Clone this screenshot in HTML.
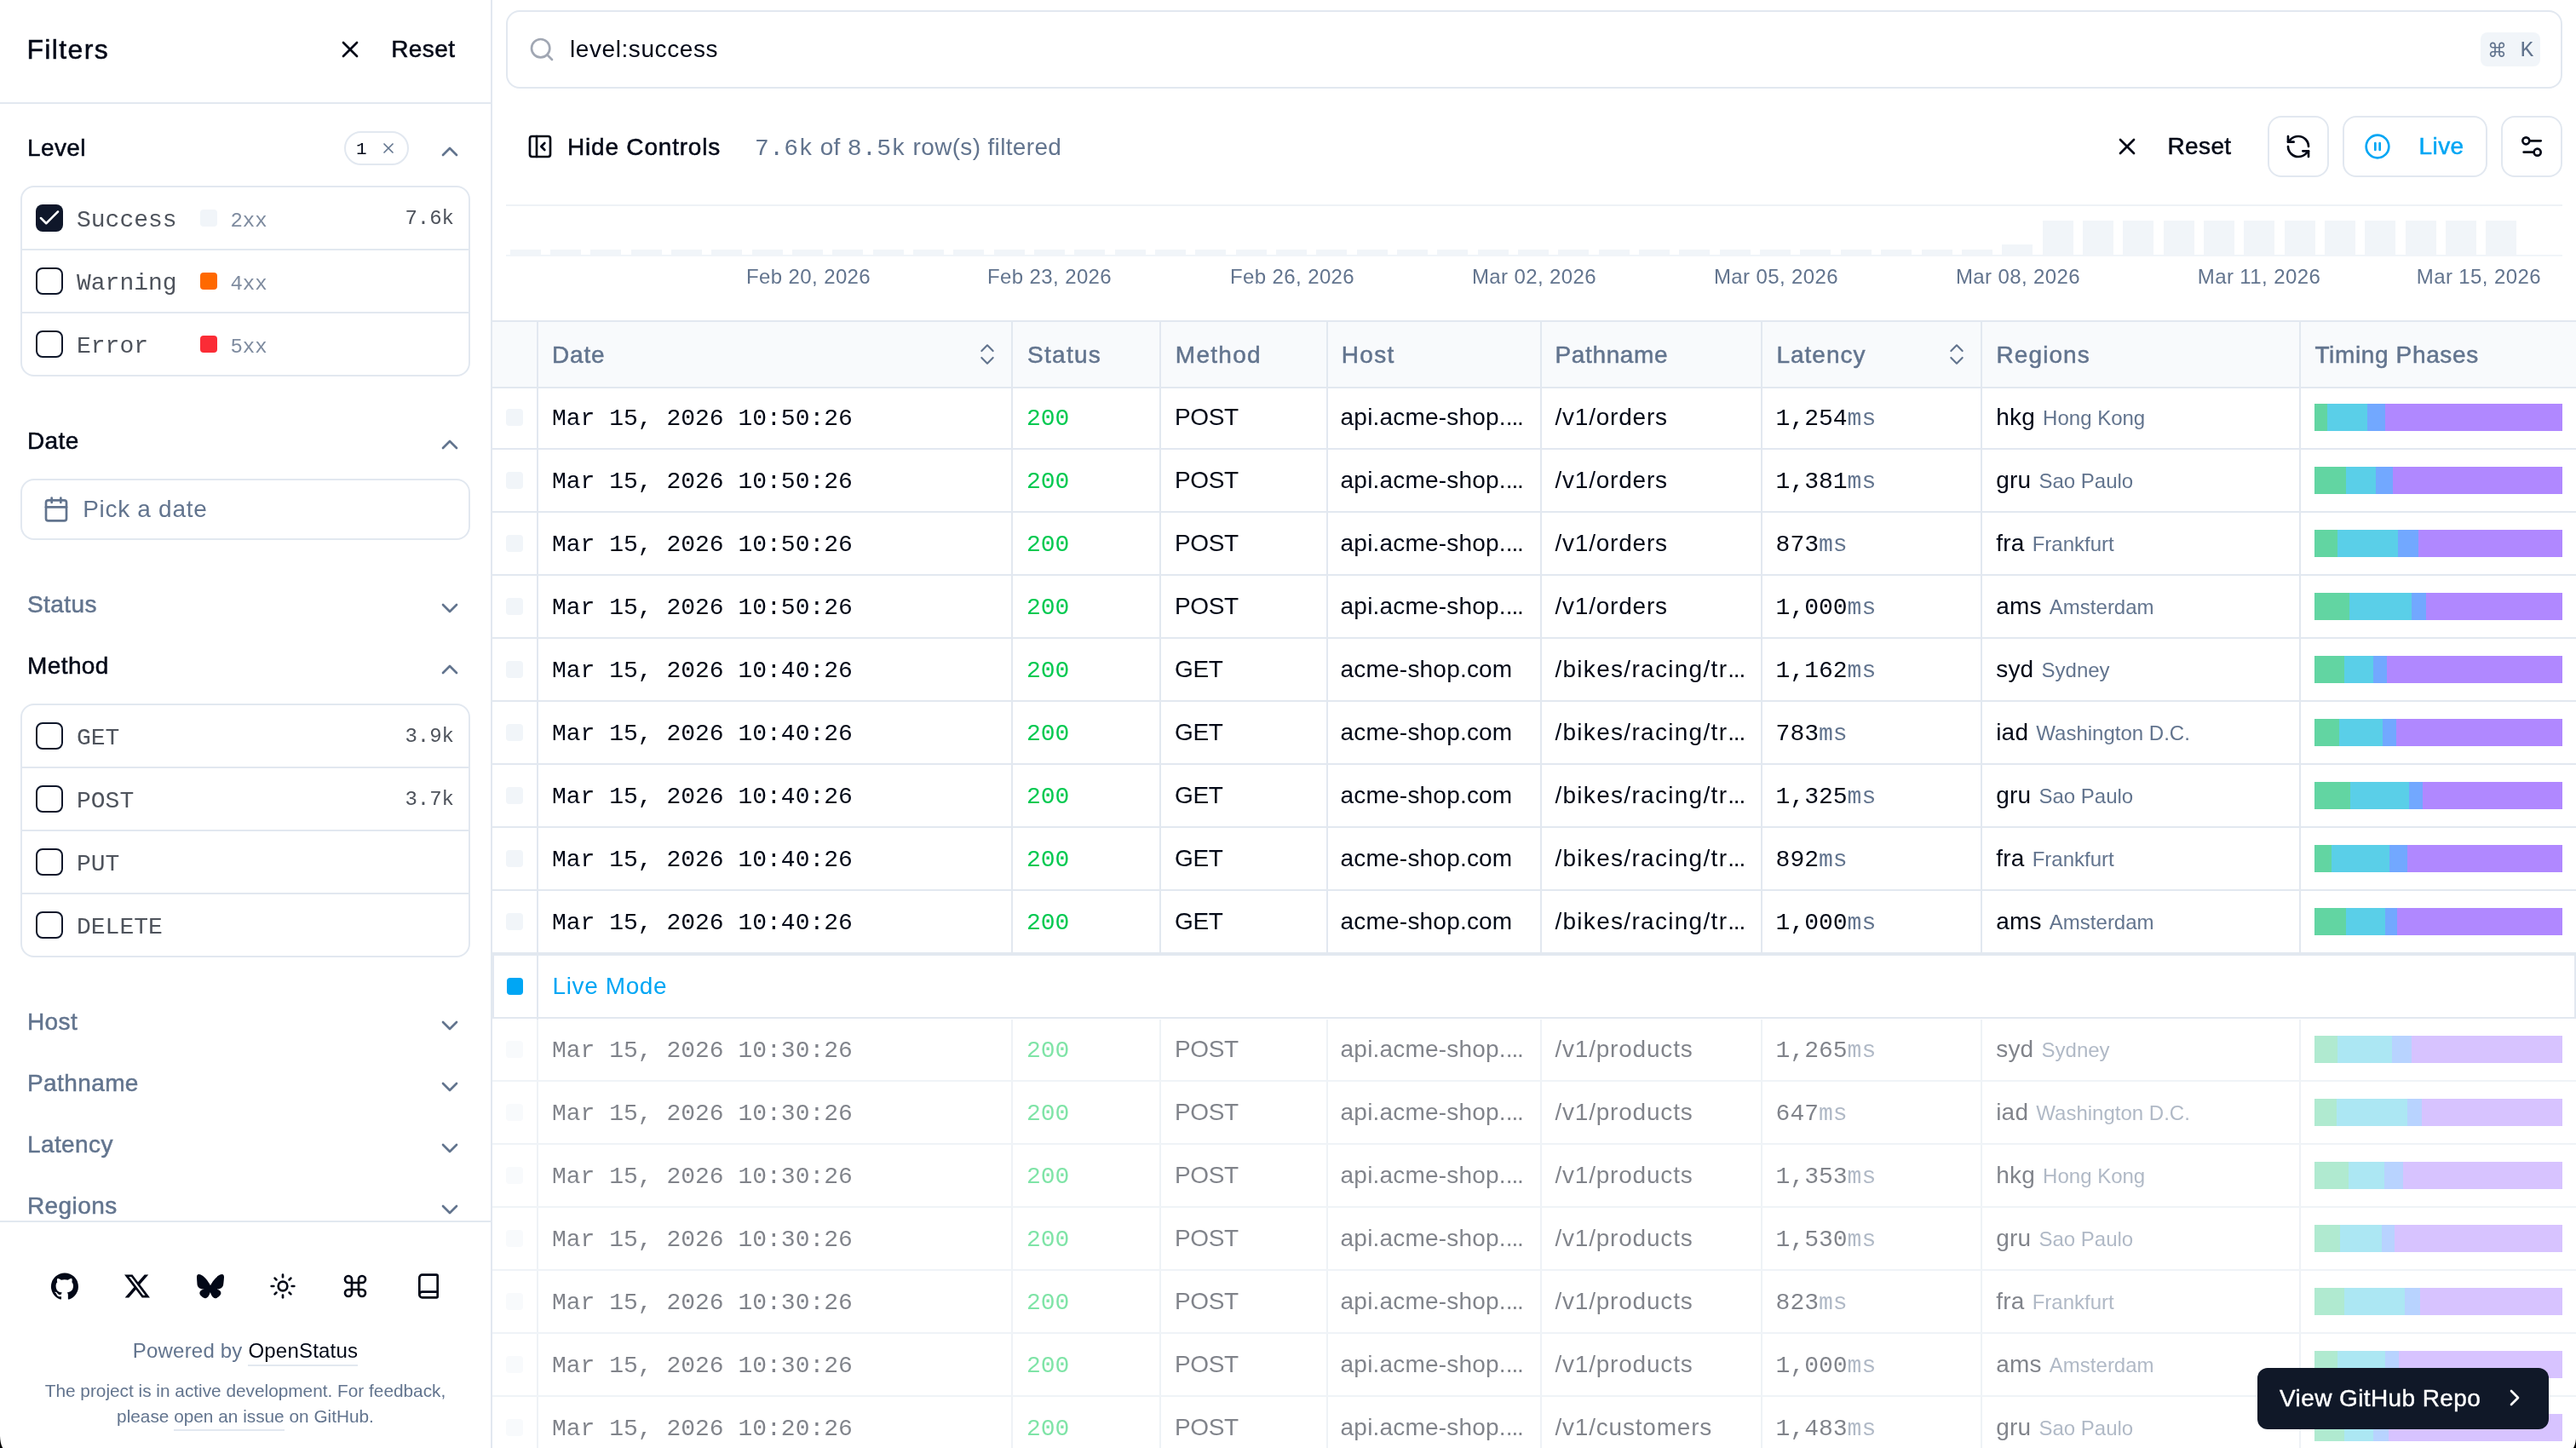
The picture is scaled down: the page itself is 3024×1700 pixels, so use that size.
<!DOCTYPE html>
<html><head><meta charset="utf-8"><title>Data Table</title>
<style>
html,body{margin:0;padding:0;}
body{width:1512px;height:850px;overflow:hidden;position:relative;background:#fff;zoom:2;font-family:"Liberation Sans",sans-serif;}
@media (max-width:2000px){body{zoom:1;}}
.t{position:absolute;line-height:1;white-space:nowrap;}
.s{font-family:"Liberation Sans",sans-serif;}
.m{font-family:"Liberation Mono",monospace;}
.r{position:absolute;box-sizing:content-box;}
.i{position:absolute;overflow:visible;}
</style></head><body><div id="root" style="position:absolute;left:0;top:0;width:1512px;height:850px;overflow:hidden;will-change:transform">
<div class="r" style="left:288px;top:0px;width:1px;height:850px;background:#e2e8f0;"></div>
<div class="r" style="left:0px;top:60px;width:288px;height:1px;background:#e2e8f0;"></div>
<div class="t s" style="left:15.70px;top:20.86px;font-size:16px;color:#020817;-webkit-text-stroke:0.25px currentColor;letter-spacing:0.68px;">Filters</div>
<svg class="i" style="left:197.50px;top:21.00px;width:16px;height:16px;" viewBox="0 0 24 24" fill="none" stroke="#020817" stroke-width="2" stroke-linecap="round" stroke-linejoin="round"><path d="M18 6 6 18"/><path d="m6 6 12 12"/></svg>
<div class="t s" style="left:229.60px;top:22.05px;font-size:14px;color:#020817;-webkit-text-stroke:0.25px currentColor;letter-spacing:0.2px;">Reset</div>
<div class="t s" style="left:16.00px;top:80.15px;font-size:14px;color:#020817;-webkit-text-stroke:0.25px currentColor;letter-spacing:0.2px;">Level</div>
<div class="r" style="left:202px;top:77px;width:36px;height:18px;border:1px solid #e2e8f0;border-radius:10px;"></div>
<div class="t m" style="left:209.00px;top:82.46px;font-size:10.5px;color:#020817;">1</div>
<svg class="i" style="left:223.00px;top:82.00px;width:10px;height:10px;" viewBox="0 0 24 24" fill="none" stroke="#62748e" stroke-width="2" stroke-linecap="round" stroke-linejoin="round"><path d="M18 6 6 18"/><path d="m6 6 12 12"/></svg>
<svg class="i" style="left:256.00px;top:81.00px;width:16px;height:16px;" viewBox="0 0 24 24" fill="none" stroke="#62748e" stroke-width="2" stroke-linecap="round" stroke-linejoin="round"><path d="m18 15-6-6-6 6"/></svg>
<div class="r" style="left:12px;top:109px;width:262px;height:110px;border:1px solid #e2e8f0;border-radius:8px;"></div>
<div class="r" style="left:13px;top:146px;width:262px;height:1px;background:#e2e8f0;"></div>
<div class="r" style="left:13px;top:183px;width:262px;height:1px;background:#e2e8f0;"></div>
<div class="r" style="left:21px;top:120px;width:16px;height:16px;background:#0f172a;border-radius:4px;"></div>
<svg class="i" style="left:21.3px;top:120.50px;width:15px;height:15px" viewBox="0 0 24 24" fill="none" stroke="#fff" stroke-width="2" stroke-linecap="round" stroke-linejoin="round"><path d="M20 6 9 17l-5-5"/></svg>
<div class="t m" style="left:45.00px;top:122.48px;font-size:14px;color:#4e535c;">Success</div>
<div class="r" style="left:117.5px;top:123px;width:10px;height:10px;background:#f1f5f9;border-radius:2px;"></div>
<div class="t m" style="left:135.20px;top:124.01px;font-size:12px;color:#7f8ca0;">2xx</div>
<div class="t m" style="right:1245.5px;top:122.48px;font-size:12px;color:#4e535c">7.6k</div>
<div class="r" style="left:21px;top:157px;width:14px;height:14px;border:1px solid #0f172a;border-radius:4px;"></div>
<div class="t m" style="left:45.00px;top:159.48px;font-size:14px;color:#4e535c;">Warning</div>
<div class="r" style="left:117.5px;top:160px;width:10px;height:10px;background:#ff6900;border-radius:2px;"></div>
<div class="t m" style="left:135.20px;top:161.01px;font-size:12px;color:#7f8ca0;">4xx</div>
<div class="r" style="left:21px;top:194px;width:14px;height:14px;border:1px solid #0f172a;border-radius:4px;"></div>
<div class="t m" style="left:45.00px;top:196.48px;font-size:14px;color:#4e535c;">Error</div>
<div class="r" style="left:117.5px;top:197px;width:10px;height:10px;background:#fb2c36;border-radius:2px;"></div>
<div class="t m" style="left:135.20px;top:198.01px;font-size:12px;color:#7f8ca0;">5xx</div>
<div class="t s" style="left:16.00px;top:252.15px;font-size:14px;color:#020817;-webkit-text-stroke:0.25px currentColor;letter-spacing:0.2px;">Date</div>
<svg class="i" style="left:256.00px;top:253.00px;width:16px;height:16px;" viewBox="0 0 24 24" fill="none" stroke="#62748e" stroke-width="2" stroke-linecap="round" stroke-linejoin="round"><path d="m18 15-6-6-6 6"/></svg>
<div class="r" style="left:12px;top:281px;width:262px;height:34px;border:1px solid #e2e8f0;border-radius:8px;"></div>
<svg class="i" style="left:25.00px;top:291.00px;width:16px;height:16px;" viewBox="0 0 24 24" fill="none" stroke="#62748e" stroke-width="2" stroke-linecap="round" stroke-linejoin="round"><path d="M8 2v4"/><path d="M16 2v4"/><rect width="18" height="18" x="3" y="4" rx="2"/><path d="M3 10h18"/></svg>
<div class="t s" style="left:48.60px;top:292.15px;font-size:14px;color:#62748e;letter-spacing:0.35px;">Pick a date</div>
<div class="t s" style="left:16.00px;top:348.15px;font-size:14px;color:#62748e;-webkit-text-stroke:0.25px currentColor;letter-spacing:0.2px;">Status</div>
<svg class="i" style="left:256.00px;top:349.00px;width:16px;height:16px;" viewBox="0 0 24 24" fill="none" stroke="#62748e" stroke-width="2" stroke-linecap="round" stroke-linejoin="round"><path d="m6 9 6 6 6-6"/></svg>
<div class="t s" style="left:16.00px;top:384.15px;font-size:14px;color:#020817;-webkit-text-stroke:0.25px currentColor;letter-spacing:0.2px;">Method</div>
<svg class="i" style="left:256.00px;top:385.00px;width:16px;height:16px;" viewBox="0 0 24 24" fill="none" stroke="#62748e" stroke-width="2" stroke-linecap="round" stroke-linejoin="round"><path d="m18 15-6-6-6 6"/></svg>
<div class="r" style="left:12px;top:413px;width:262px;height:147px;border:1px solid #e2e8f0;border-radius:8px;"></div>
<div class="r" style="left:13px;top:450px;width:262px;height:1px;background:#e2e8f0;"></div>
<div class="r" style="left:13px;top:487px;width:262px;height:1px;background:#e2e8f0;"></div>
<div class="r" style="left:13px;top:524px;width:262px;height:1px;background:#e2e8f0;"></div>
<div class="r" style="left:21px;top:424px;width:14px;height:14px;border:1px solid #0f172a;border-radius:4px;"></div>
<div class="t m" style="left:45.00px;top:426.48px;font-size:14px;color:#4e535c;">GET</div>
<div class="t m" style="right:1245.5px;top:426.48px;font-size:12px;color:#4e535c">3.9k</div>
<div class="r" style="left:21px;top:461px;width:14px;height:14px;border:1px solid #0f172a;border-radius:4px;"></div>
<div class="t m" style="left:45.00px;top:463.48px;font-size:14px;color:#4e535c;">POST</div>
<div class="t m" style="right:1245.5px;top:463.48px;font-size:12px;color:#4e535c">3.7k</div>
<div class="r" style="left:21px;top:498px;width:14px;height:14px;border:1px solid #0f172a;border-radius:4px;"></div>
<div class="t m" style="left:45.00px;top:500.48px;font-size:14px;color:#4e535c;">PUT</div>
<div class="r" style="left:21px;top:535px;width:14px;height:14px;border:1px solid #0f172a;border-radius:4px;"></div>
<div class="t m" style="left:45.00px;top:537.48px;font-size:14px;color:#4e535c;">DELETE</div>
<div class="t s" style="left:16.00px;top:593.15px;font-size:14px;color:#62748e;-webkit-text-stroke:0.25px currentColor;letter-spacing:0.2px;">Host</div>
<svg class="i" style="left:256.00px;top:594.00px;width:16px;height:16px;" viewBox="0 0 24 24" fill="none" stroke="#62748e" stroke-width="2" stroke-linecap="round" stroke-linejoin="round"><path d="m6 9 6 6 6-6"/></svg>
<div class="t s" style="left:16.00px;top:629.15px;font-size:14px;color:#62748e;-webkit-text-stroke:0.25px currentColor;letter-spacing:0.2px;">Pathname</div>
<svg class="i" style="left:256.00px;top:630.00px;width:16px;height:16px;" viewBox="0 0 24 24" fill="none" stroke="#62748e" stroke-width="2" stroke-linecap="round" stroke-linejoin="round"><path d="m6 9 6 6 6-6"/></svg>
<div class="t s" style="left:16.00px;top:665.15px;font-size:14px;color:#62748e;-webkit-text-stroke:0.25px currentColor;letter-spacing:0.2px;">Latency</div>
<svg class="i" style="left:256.00px;top:666.00px;width:16px;height:16px;" viewBox="0 0 24 24" fill="none" stroke="#62748e" stroke-width="2" stroke-linecap="round" stroke-linejoin="round"><path d="m6 9 6 6 6-6"/></svg>
<div class="t s" style="left:16.00px;top:701.15px;font-size:14px;color:#62748e;-webkit-text-stroke:0.25px currentColor;letter-spacing:0.2px;">Regions</div>
<svg class="i" style="left:256.00px;top:702.00px;width:16px;height:16px;" viewBox="0 0 24 24" fill="none" stroke="#62748e" stroke-width="2" stroke-linecap="round" stroke-linejoin="round"><path d="m6 9 6 6 6-6"/></svg>
<div class="r" style="left:0px;top:716.5px;width:288px;height:133.5px;background:#fff;"></div>
<div class="r" style="left:0px;top:716.5px;width:288px;height:1px;background:#e2e8f0;"></div>
<svg class="i" style="left:30.00px;top:747.00px;width:16px;height:16px;color:#020817" viewBox="0 0 24 24" fill="none" stroke="#020817" stroke-width="2" stroke-linecap="round" stroke-linejoin="round"><path fill="currentColor" stroke="none" d="M12 .3a12 12 0 0 0-3.8 23.4c.6.1.8-.3.8-.6v-2c-3.3.7-4-1.6-4-1.6-.6-1.4-1.4-1.8-1.4-1.8-1-.7.1-.7.1-.7 1.2.1 1.8 1.2 1.8 1.2 1 1.8 2.8 1.3 3.5 1 0-.8.4-1.3.7-1.6-2.7-.3-5.5-1.3-5.5-6 0-1.2.5-2.3 1.3-3.1-.2-.4-.6-1.6 0-3.2 0 0 1-.3 3.4 1.2a11.5 11.5 0 0 1 6 0c2.3-1.5 3.3-1.2 3.3-1.2.6 1.6.2 2.8 0 3.2.9.8 1.3 1.9 1.3 3.2 0 4.6-2.8 5.6-5.5 5.9.5.4.9 1 .9 2.2v3.3c0 .3.1.7.8.6A12 12 0 0 0 12 .3"/></svg>
<svg class="i" style="left:73.00px;top:747.50px;width:15px;height:15px;color:#020817" viewBox="0 0 24 24" fill="none" stroke="#020817" stroke-width="2" stroke-linecap="round" stroke-linejoin="round"><path fill="currentColor" stroke="none" d="M18.9 1.2h3.7l-8 9.2L24 22.8h-7.4l-5.8-7.6-6.6 7.6H.5L9 13 0 1.2h7.6l5.2 6.9zm-1.3 19.4h2L6.5 3.2H4.3z"/></svg>
<svg class="i" style="left:115.50px;top:747.00px;width:16px;height:16px;color:#020817" viewBox="0 0 24 24" fill="none" stroke="#020817" stroke-width="2" stroke-linecap="round" stroke-linejoin="round"><path fill="currentColor" stroke="none" d="M5.2 2.9C8 5 10.9 9.1 12 11.4c1.1-2.3 4-6.4 6.8-8.5 2-1.5 5.2-2.6 5.2 1 0 .8-.4 6.2-.7 7.1-.9 3.1-4 3.9-6.8 3.4 4.9.8 6.1 3.6 3.4 6.3-5.1 5.2-7.3-1.3-7.9-3-.1-.3-.1-.5-.1-.3 0-.2 0 0-.1.3-.6 1.7-2.8 8.2-7.9 3-2.7-2.7-1.5-5.5 3.4-6.3-2.8.5-5.9-.3-6.8-3.4C.4 10.1 0 4.7 0 3.9c0-3.6 3.2-2.5 5.2-1z"/></svg>
<svg class="i" style="left:158.00px;top:747.00px;width:16px;height:16px;" viewBox="0 0 24 24" fill="none" stroke="#020817" stroke-width="2" stroke-linecap="round" stroke-linejoin="round"><circle cx="12" cy="12" r="4"/><path d="M12 2v2"/><path d="M12 20v2"/><path d="m4.93 4.93 1.41 1.41"/><path d="m17.66 17.66 1.41 1.41"/><path d="M2 12h2"/><path d="M20 12h2"/><path d="m6.34 17.66-1.41 1.41"/><path d="m19.07 4.93-1.41 1.41"/></svg>
<svg class="i" style="left:200.50px;top:747.00px;width:16px;height:16px;" viewBox="0 0 24 24" fill="none" stroke="#020817" stroke-width="2" stroke-linecap="round" stroke-linejoin="round"><path d="M15 6v12a3 3 0 1 0 3-3H6a3 3 0 1 0 3 3V6a3 3 0 1 0-3 3h12a3 3 0 1 0-3-3"/></svg>
<svg class="i" style="left:243.50px;top:747.00px;width:16px;height:16px;" viewBox="0 0 24 24" fill="none" stroke="#020817" stroke-width="2" stroke-linecap="round" stroke-linejoin="round"><path d="M4 19.5v-15A2.5 2.5 0 0 1 6.5 2H19a1 1 0 0 1 1 1v18a1 1 0 0 1-1 1H6.5a1 1 0 0 1 0-5H20"/></svg>
<div class="t s" style="left:0;width:288px;text-align:center;top:787.14px;font-size:12px;color:#62748e;letter-spacing:0.1px">Powered by <span style="color:#020817;border-bottom:1px solid #e2e8f0;padding-bottom:1.5px">OpenStatus</span></div>
<div class="t s" style="left:0;width:288px;text-align:center;top:811.30px;font-size:10.4px;color:#62748e;line-height:15.4px;margin-top:-2.50px">The project is in active development. For feedback,<br>please <span style="border-bottom:1px solid #e2e8f0;padding-bottom:2px">open an issue</span> on GitHub.</div>
<div class="r" style="left:297px;top:6px;width:1205px;height:44px;border:1px solid #e2e8f0;border-radius:8px;"></div>
<svg class="i" style="left:310.00px;top:21.00px;width:16px;height:16px;" viewBox="0 0 24 24" fill="none" stroke="#a1a7b3" stroke-width="2" stroke-linecap="round" stroke-linejoin="round"><circle cx="11" cy="11" r="8"/><path d="m21 21-4.3-4.3"/></svg>
<div class="t s" style="left:334.50px;top:22.21px;font-size:14px;color:#020817;letter-spacing:0.29px;">level:success</div>
<div class="r" style="left:1456px;top:19px;width:35px;height:20px;background:#f1f5f9;border-radius:4px;"></div>
<div class="t s" style="left:1460.00px;top:23.87px;font-size:11.5px;color:#62748e;">⌘</div>
<div class="t m" style="left:1479.30px;top:23.14px;font-size:13px;color:#62748e;">K</div>
<svg class="i" style="left:309.00px;top:78.00px;width:16px;height:16px;" viewBox="0 0 24 24" fill="none" stroke="#020817" stroke-width="2" stroke-linecap="round" stroke-linejoin="round"><rect width="18" height="18" x="3" y="3" rx="2"/><path d="M9 3v18"/><path d="m16 15-3-3 3-3"/></svg>
<div class="t s" style="left:333.00px;top:79.35px;font-size:14px;color:#020817;-webkit-text-stroke:0.25px currentColor;letter-spacing:0.4px;">Hide Controls</div>
<div class="t s" style="left:443px;top:79.35px;font-size:14px;color:#62748e;letter-spacing:0.17px"><span class="m">7.6k</span> of <span class="m">8.5k</span> row(s) filtered</div>
<svg class="i" style="left:1240.50px;top:78.00px;width:16px;height:16px;" viewBox="0 0 24 24" fill="none" stroke="#020817" stroke-width="2" stroke-linecap="round" stroke-linejoin="round"><path d="M18 6 6 18"/><path d="m6 6 12 12"/></svg>
<div class="t s" style="left:1272.20px;top:78.95px;font-size:14px;color:#020817;-webkit-text-stroke:0.25px currentColor;letter-spacing:0.2px;">Reset</div>
<div class="r" style="left:1331px;top:68px;width:34px;height:34px;border:1px solid #e2e8f0;border-radius:8px;"></div>
<svg class="i" style="left:1341.00px;top:78.00px;width:16px;height:16px;" viewBox="0 0 24 24" fill="none" stroke="#020817" stroke-width="2" stroke-linecap="round" stroke-linejoin="round"><path d="M21 12a9 9 0 0 0-9-9 9.75 9.75 0 0 0-6.74 2.74L3 8"/><path d="M3 3v5h5"/><path d="M3 12a9 9 0 0 0 9 9 9.75 9.75 0 0 0 6.74-2.74L21 16"/><path d="M16 16h5v5"/></svg>
<div class="r" style="left:1375px;top:68px;width:83px;height:34px;border:1px solid #e2e8f0;border-radius:8px;"></div>
<svg class="i" style="left:1387.50px;top:78.00px;width:16px;height:16px;" viewBox="0 0 24 24" fill="none" stroke="#00a6f4" stroke-width="2" stroke-linecap="round" stroke-linejoin="round"><circle cx="12" cy="12" r="10"/><line x1="10" x2="10" y1="15" y2="9"/><line x1="14" x2="14" y1="15" y2="9"/></svg>
<div class="t s" style="left:1419.80px;top:79.15px;font-size:14px;color:#00a6f4;-webkit-text-stroke:0.25px currentColor;letter-spacing:0.2px;">Live</div>
<div class="r" style="left:1468px;top:68px;width:34px;height:34px;border:1px solid #e2e8f0;border-radius:8px;"></div>
<svg class="i" style="left:1478.00px;top:78.00px;width:16px;height:16px;" viewBox="0 0 24 24" fill="none" stroke="#020817" stroke-width="2" stroke-linecap="round" stroke-linejoin="round"><path d="M20 7h-9"/><path d="M14 17H5"/><circle cx="17" cy="17" r="3"/><circle cx="7" cy="7" r="3"/></svg>
<div class="r" style="left:297px;top:120px;width:1207px;height:1px;background:#eef2f6;"></div>
<div class="r" style="left:299.5px;top:146.5px;width:17.8px;height:3.0px;background:#f1f5f9;"></div>
<div class="r" style="left:323.0px;top:146.5px;width:17.8px;height:3.0px;background:#f1f5f9;"></div>
<div class="r" style="left:346.5px;top:146.5px;width:17.8px;height:3.0px;background:#f1f5f9;"></div>
<div class="r" style="left:370.5px;top:146.5px;width:17.8px;height:3.0px;background:#f1f5f9;"></div>
<div class="r" style="left:394.0px;top:146.5px;width:17.8px;height:3.0px;background:#f1f5f9;"></div>
<div class="r" style="left:417.5px;top:146.5px;width:17.8px;height:3.0px;background:#f1f5f9;"></div>
<div class="r" style="left:441.5px;top:146.5px;width:17.8px;height:3.0px;background:#f1f5f9;"></div>
<div class="r" style="left:465.0px;top:146.5px;width:17.8px;height:3.0px;background:#f1f5f9;"></div>
<div class="r" style="left:488.5px;top:146.5px;width:17.8px;height:3.0px;background:#f1f5f9;"></div>
<div class="r" style="left:512.5px;top:146.5px;width:17.8px;height:3.0px;background:#f1f5f9;"></div>
<div class="r" style="left:536.0px;top:146.5px;width:17.8px;height:3.0px;background:#f1f5f9;"></div>
<div class="r" style="left:559.5px;top:146.5px;width:17.8px;height:3.0px;background:#f1f5f9;"></div>
<div class="r" style="left:583.5px;top:146.5px;width:17.8px;height:3.0px;background:#f1f5f9;"></div>
<div class="r" style="left:607.0px;top:146.5px;width:17.8px;height:3.0px;background:#f1f5f9;"></div>
<div class="r" style="left:630.5px;top:146.5px;width:17.8px;height:3.0px;background:#f1f5f9;"></div>
<div class="r" style="left:654.5px;top:146.5px;width:17.8px;height:3.0px;background:#f1f5f9;"></div>
<div class="r" style="left:678.0px;top:146.5px;width:17.8px;height:3.0px;background:#f1f5f9;"></div>
<div class="r" style="left:701.5px;top:146.5px;width:17.8px;height:3.0px;background:#f1f5f9;"></div>
<div class="r" style="left:725.5px;top:146.5px;width:17.8px;height:3.0px;background:#f1f5f9;"></div>
<div class="r" style="left:749.0px;top:146.5px;width:17.8px;height:3.0px;background:#f1f5f9;"></div>
<div class="r" style="left:772.5px;top:146.5px;width:17.8px;height:3.0px;background:#f1f5f9;"></div>
<div class="r" style="left:796.5px;top:146.5px;width:17.8px;height:3.0px;background:#f1f5f9;"></div>
<div class="r" style="left:820.0px;top:146.5px;width:17.8px;height:3.0px;background:#f1f5f9;"></div>
<div class="r" style="left:843.5px;top:146.5px;width:17.8px;height:3.0px;background:#f1f5f9;"></div>
<div class="r" style="left:867.5px;top:146.5px;width:17.8px;height:3.0px;background:#f1f5f9;"></div>
<div class="r" style="left:891.0px;top:146.5px;width:17.8px;height:3.0px;background:#f1f5f9;"></div>
<div class="r" style="left:914.5px;top:146.5px;width:17.8px;height:3.0px;background:#f1f5f9;"></div>
<div class="r" style="left:938.5px;top:146.5px;width:17.8px;height:3.0px;background:#f1f5f9;"></div>
<div class="r" style="left:962.0px;top:146.5px;width:17.8px;height:3.0px;background:#f1f5f9;"></div>
<div class="r" style="left:985.5px;top:146.5px;width:17.8px;height:3.0px;background:#f1f5f9;"></div>
<div class="r" style="left:1009.5px;top:146.5px;width:17.8px;height:3.0px;background:#f1f5f9;"></div>
<div class="r" style="left:1033.0px;top:146.5px;width:17.8px;height:3.0px;background:#f1f5f9;"></div>
<div class="r" style="left:1056.5px;top:146.5px;width:17.8px;height:3.0px;background:#f1f5f9;"></div>
<div class="r" style="left:1080.5px;top:146.5px;width:17.8px;height:3.0px;background:#f1f5f9;"></div>
<div class="r" style="left:1104.0px;top:146.5px;width:17.8px;height:3.0px;background:#f1f5f9;"></div>
<div class="r" style="left:1128.0px;top:146.5px;width:17.8px;height:3.0px;background:#f1f5f9;"></div>
<div class="r" style="left:1151.5px;top:146.5px;width:17.8px;height:3.0px;background:#f1f5f9;"></div>
<div class="r" style="left:1175.0px;top:143.5px;width:17.8px;height:6.0px;background:#f1f5f9;"></div>
<div class="r" style="left:1199.0px;top:129.5px;width:17.8px;height:20.0px;background:#f1f5f9;"></div>
<div class="r" style="left:1222.5px;top:129.5px;width:17.8px;height:20.0px;background:#f1f5f9;"></div>
<div class="r" style="left:1246.0px;top:129.5px;width:17.8px;height:20.0px;background:#f1f5f9;"></div>
<div class="r" style="left:1270.0px;top:129.5px;width:17.8px;height:20.0px;background:#f1f5f9;"></div>
<div class="r" style="left:1293.5px;top:129.5px;width:17.8px;height:20.0px;background:#f1f5f9;"></div>
<div class="r" style="left:1317.0px;top:129.5px;width:17.8px;height:20.0px;background:#f1f5f9;"></div>
<div class="r" style="left:1341.0px;top:129.5px;width:17.8px;height:20.0px;background:#f1f5f9;"></div>
<div class="r" style="left:1364.5px;top:129.5px;width:17.8px;height:20.0px;background:#f1f5f9;"></div>
<div class="r" style="left:1388.0px;top:129.5px;width:17.8px;height:20.0px;background:#f1f5f9;"></div>
<div class="r" style="left:1412.0px;top:129.5px;width:17.8px;height:20.0px;background:#f1f5f9;"></div>
<div class="r" style="left:1435.5px;top:129.5px;width:17.8px;height:20.0px;background:#f1f5f9;"></div>
<div class="r" style="left:1459.0px;top:129.5px;width:17.8px;height:20.0px;background:#f1f5f9;"></div>
<div class="r" style="left:297px;top:149.5px;width:1207px;height:1px;background:#f1f5f9;"></div>
<div class="t s" style="left:414.5px;width:120px;text-align:center;top:156.34px;font-size:12px;color:#62748e;letter-spacing:0.2px">Feb 20, 2026</div>
<div class="t s" style="left:556px;width:120px;text-align:center;top:156.34px;font-size:12px;color:#62748e;letter-spacing:0.2px">Feb 23, 2026</div>
<div class="t s" style="left:698.5px;width:120px;text-align:center;top:156.34px;font-size:12px;color:#62748e;letter-spacing:0.2px">Feb 26, 2026</div>
<div class="t s" style="left:840.5px;width:120px;text-align:center;top:156.34px;font-size:12px;color:#62748e;letter-spacing:0.2px">Mar 02, 2026</div>
<div class="t s" style="left:982.5px;width:120px;text-align:center;top:156.34px;font-size:12px;color:#62748e;letter-spacing:0.2px">Mar 05, 2026</div>
<div class="t s" style="left:1124.5px;width:120px;text-align:center;top:156.34px;font-size:12px;color:#62748e;letter-spacing:0.2px">Mar 08, 2026</div>
<div class="t s" style="left:1266px;width:120px;text-align:center;top:156.34px;font-size:12px;color:#62748e;letter-spacing:0.2px">Mar 11, 2026</div>
<div class="t s" style="right:20.5px;top:156.34px;font-size:12px;color:#62748e;letter-spacing:0.2px">Mar 15, 2026</div>
<div class="r" style="left:289px;top:188px;width:1223px;height:1px;background:#e2e8f0;"></div>
<div class="r" style="left:289px;top:189px;width:1223px;height:38px;background:#f8fafc;"></div>
<div class="r" style="left:289px;top:227px;width:1223px;height:1px;background:#e2e8f0;"></div>
<div class="t s" style="left:324.00px;top:201.25px;font-size:14px;color:#62748e;-webkit-text-stroke:0.25px currentColor;letter-spacing:0.4px;">Date</div>
<div class="t s" style="left:602.95px;top:201.25px;font-size:14px;color:#62748e;-webkit-text-stroke:0.25px currentColor;letter-spacing:0.66px;">Status</div>
<div class="t s" style="left:689.90px;top:201.25px;font-size:14px;color:#62748e;-webkit-text-stroke:0.25px currentColor;letter-spacing:0.65px;">Method</div>
<div class="t s" style="left:787.40px;top:201.25px;font-size:14px;color:#62748e;-webkit-text-stroke:0.25px currentColor;letter-spacing:0.65px;">Host</div>
<div class="t s" style="left:912.70px;top:201.25px;font-size:14px;color:#62748e;-webkit-text-stroke:0.25px currentColor;letter-spacing:0.33px;">Pathname</div>
<div class="t s" style="left:1042.70px;top:201.25px;font-size:14px;color:#62748e;-webkit-text-stroke:0.25px currentColor;letter-spacing:0.5px;">Latency</div>
<div class="t s" style="left:1171.80px;top:201.25px;font-size:14px;color:#62748e;-webkit-text-stroke:0.25px currentColor;letter-spacing:0.53px;">Regions</div>
<div class="t s" style="left:1358.70px;top:201.25px;font-size:14px;color:#62748e;-webkit-text-stroke:0.25px currentColor;letter-spacing:0.32px;">Timing Phases</div>
<svg class="i" style="left:571.50px;top:200.00px;width:16px;height:16px;" viewBox="0 0 24 24" fill="none" stroke="#62748e" stroke-width="1.6" stroke-linecap="round" stroke-linejoin="round"><path d="m7 15 5 5 5-5"/><path d="m7 9 5-5 5 5"/></svg>
<svg class="i" style="left:1140.60px;top:200.00px;width:16px;height:16px;" viewBox="0 0 24 24" fill="none" stroke="#62748e" stroke-width="1.6" stroke-linecap="round" stroke-linejoin="round"><path d="m7 15 5 5 5-5"/><path d="m7 9 5-5 5 5"/></svg>
<div class="r" style="left:315px;top:188px;width:1px;height:371.5px;background:#e2e8f0;"></div>
<div class="r" style="left:593.5px;top:188px;width:1px;height:371.5px;background:#e2e8f0;"></div>
<div class="r" style="left:680.5px;top:188px;width:1px;height:371.5px;background:#e2e8f0;"></div>
<div class="r" style="left:778.5px;top:188px;width:1px;height:371.5px;background:#e2e8f0;"></div>
<div class="r" style="left:904px;top:188px;width:1px;height:371.5px;background:#e2e8f0;"></div>
<div class="r" style="left:1033.5px;top:188px;width:1px;height:371.5px;background:#e2e8f0;"></div>
<div class="r" style="left:1162.5px;top:188px;width:1px;height:371.5px;background:#e2e8f0;"></div>
<div class="r" style="left:1349.5px;top:188px;width:1px;height:371.5px;background:#e2e8f0;"></div>
<div class="r" style="left:315px;top:559.5px;width:1px;height:39px;background:#e2e8f0;"></div>
<div class="r" style="left:315px;top:598.5px;width:1px;height:251.5px;background:#eef2f6;"></div>
<div class="r" style="left:593.5px;top:598.5px;width:1px;height:251.5px;background:#eef2f6;"></div>
<div class="r" style="left:680.5px;top:598.5px;width:1px;height:251.5px;background:#eef2f6;"></div>
<div class="r" style="left:778.5px;top:598.5px;width:1px;height:251.5px;background:#eef2f6;"></div>
<div class="r" style="left:904px;top:598.5px;width:1px;height:251.5px;background:#eef2f6;"></div>
<div class="r" style="left:1033.5px;top:598.5px;width:1px;height:251.5px;background:#eef2f6;"></div>
<div class="r" style="left:1162.5px;top:598.5px;width:1px;height:251.5px;background:#eef2f6;"></div>
<div class="r" style="left:1349.5px;top:598.5px;width:1px;height:251.5px;background:#eef2f6;"></div>
<div style="position:absolute;left:0;top:0;width:1512px;height:850px;">
<div class="r" style="left:297px;top:240.0px;width:10px;height:10px;background:#f1f5f9;border-radius:2px;"></div>
<div class="t m" style="left:324.00px;top:239.18px;font-size:14px;color:#020817;">Mar 15, 2026 10:50:26</div>
<div class="t m" style="left:602.50px;top:239.18px;font-size:14px;color:#00c950;">200</div>
<div class="t s" style="left:689.50px;top:238.05px;font-size:14px;color:#020817;letter-spacing:-0.2px;">POST</div>
<div class="t s" style="left:786.8px;top:238.05px;font-size:14px;color:#020817;letter-spacing:0.1px">api.acme-shop.<span style="letter-spacing:-0.6px">...</span></div>
<div class="t s" style="left:912.7px;top:238.05px;font-size:14px;color:#020817;letter-spacing:0.4px">/v1/orders</div>
<div class="t m" style="left:1042.3px;top:239.18px;font-size:14px;color:#020817">1,254<span style="color:#62748e">ms</span></div>
<div class="t s" style="left:1171.6px;top:238.05px;font-size:14px;color:#020817;letter-spacing:0.1px">hkg <span style="font-size:12px;color:#62748e;letter-spacing:0px;margin-left:0.6px">Hong Kong</span></div>
<div class="r" style="left:1358.5px;top:237.0px;width:145.3px;height:16px;display:flex"><div style="width:5.2%;background:#62d5a2"></div><div style="width:16.1%;background:#5acfe8"></div><div style="width:7.3%;background:#72a8ff"></div><div style="width:71.39999999999999%;background:#b088ff"></div></div>
</div>
<div class="r" style="left:289px;top:263.0px;width:1223px;height:1px;background:#e2e8f0;"></div>
<div style="position:absolute;left:0;top:0;width:1512px;height:850px;">
<div class="r" style="left:297px;top:277.0px;width:10px;height:10px;background:#f1f5f9;border-radius:2px;"></div>
<div class="t m" style="left:324.00px;top:276.18px;font-size:14px;color:#020817;">Mar 15, 2026 10:50:26</div>
<div class="t m" style="left:602.50px;top:276.18px;font-size:14px;color:#00c950;">200</div>
<div class="t s" style="left:689.50px;top:275.05px;font-size:14px;color:#020817;letter-spacing:-0.2px;">POST</div>
<div class="t s" style="left:786.8px;top:275.05px;font-size:14px;color:#020817;letter-spacing:0.1px">api.acme-shop.<span style="letter-spacing:-0.6px">...</span></div>
<div class="t s" style="left:912.7px;top:275.05px;font-size:14px;color:#020817;letter-spacing:0.4px">/v1/orders</div>
<div class="t m" style="left:1042.3px;top:276.18px;font-size:14px;color:#020817">1,381<span style="color:#62748e">ms</span></div>
<div class="t s" style="left:1171.6px;top:275.05px;font-size:14px;color:#020817;letter-spacing:0.1px">gru <span style="font-size:12px;color:#62748e;letter-spacing:0px;margin-left:0.6px">Sao Paulo</span></div>
<div class="r" style="left:1358.5px;top:274.0px;width:145.3px;height:16px;display:flex"><div style="width:12.7%;background:#62d5a2"></div><div style="width:12.0%;background:#5acfe8"></div><div style="width:6.9%;background:#72a8ff"></div><div style="width:68.39999999999999%;background:#b088ff"></div></div>
</div>
<div class="r" style="left:289px;top:300.0px;width:1223px;height:1px;background:#e2e8f0;"></div>
<div style="position:absolute;left:0;top:0;width:1512px;height:850px;">
<div class="r" style="left:297px;top:314.0px;width:10px;height:10px;background:#f1f5f9;border-radius:2px;"></div>
<div class="t m" style="left:324.00px;top:313.18px;font-size:14px;color:#020817;">Mar 15, 2026 10:50:26</div>
<div class="t m" style="left:602.50px;top:313.18px;font-size:14px;color:#00c950;">200</div>
<div class="t s" style="left:689.50px;top:312.05px;font-size:14px;color:#020817;letter-spacing:-0.2px;">POST</div>
<div class="t s" style="left:786.8px;top:312.05px;font-size:14px;color:#020817;letter-spacing:0.1px">api.acme-shop.<span style="letter-spacing:-0.6px">...</span></div>
<div class="t s" style="left:912.7px;top:312.05px;font-size:14px;color:#020817;letter-spacing:0.4px">/v1/orders</div>
<div class="t m" style="left:1042.3px;top:313.18px;font-size:14px;color:#020817">873<span style="color:#62748e">ms</span></div>
<div class="t s" style="left:1171.6px;top:312.05px;font-size:14px;color:#020817;letter-spacing:0.1px">fra <span style="font-size:12px;color:#62748e;letter-spacing:0px;margin-left:0.6px">Frankfurt</span></div>
<div class="r" style="left:1358.5px;top:311.0px;width:145.3px;height:16px;display:flex"><div style="width:9.3%;background:#62d5a2"></div><div style="width:24.4%;background:#5acfe8"></div><div style="width:8.3%;background:#72a8ff"></div><div style="width:58.000000000000014%;background:#b088ff"></div></div>
</div>
<div class="r" style="left:289px;top:337.0px;width:1223px;height:1px;background:#e2e8f0;"></div>
<div style="position:absolute;left:0;top:0;width:1512px;height:850px;">
<div class="r" style="left:297px;top:351.0px;width:10px;height:10px;background:#f1f5f9;border-radius:2px;"></div>
<div class="t m" style="left:324.00px;top:350.18px;font-size:14px;color:#020817;">Mar 15, 2026 10:50:26</div>
<div class="t m" style="left:602.50px;top:350.18px;font-size:14px;color:#00c950;">200</div>
<div class="t s" style="left:689.50px;top:349.05px;font-size:14px;color:#020817;letter-spacing:-0.2px;">POST</div>
<div class="t s" style="left:786.8px;top:349.05px;font-size:14px;color:#020817;letter-spacing:0.1px">api.acme-shop.<span style="letter-spacing:-0.6px">...</span></div>
<div class="t s" style="left:912.7px;top:349.05px;font-size:14px;color:#020817;letter-spacing:0.4px">/v1/orders</div>
<div class="t m" style="left:1042.3px;top:350.18px;font-size:14px;color:#020817">1,000<span style="color:#62748e">ms</span></div>
<div class="t s" style="left:1171.6px;top:349.05px;font-size:14px;color:#020817;letter-spacing:0.1px">ams <span style="font-size:12px;color:#62748e;letter-spacing:0px;margin-left:0.6px">Amsterdam</span></div>
<div class="r" style="left:1358.5px;top:348.0px;width:145.3px;height:16px;display:flex"><div style="width:14.1%;background:#62d5a2"></div><div style="width:25.2%;background:#5acfe8"></div><div style="width:5.8%;background:#72a8ff"></div><div style="width:54.900000000000006%;background:#b088ff"></div></div>
</div>
<div class="r" style="left:289px;top:374.0px;width:1223px;height:1px;background:#e2e8f0;"></div>
<div style="position:absolute;left:0;top:0;width:1512px;height:850px;">
<div class="r" style="left:297px;top:388.0px;width:10px;height:10px;background:#f1f5f9;border-radius:2px;"></div>
<div class="t m" style="left:324.00px;top:387.18px;font-size:14px;color:#020817;">Mar 15, 2026 10:40:26</div>
<div class="t m" style="left:602.50px;top:387.18px;font-size:14px;color:#00c950;">200</div>
<div class="t s" style="left:689.50px;top:386.05px;font-size:14px;color:#020817;letter-spacing:-0.2px;">GET</div>
<div class="t s" style="left:786.8px;top:386.05px;font-size:14px;color:#020817;letter-spacing:0.1px">acme-shop.com</div>
<div class="t s" style="left:912.7px;top:386.05px;font-size:14px;color:#020817;letter-spacing:0.65px">/bikes/racing/tr<span style="letter-spacing:-0.6px">...</span></div>
<div class="t m" style="left:1042.3px;top:387.18px;font-size:14px;color:#020817">1,162<span style="color:#62748e">ms</span></div>
<div class="t s" style="left:1171.6px;top:386.05px;font-size:14px;color:#020817;letter-spacing:0.1px">syd <span style="font-size:12px;color:#62748e;letter-spacing:0px;margin-left:0.6px">Sydney</span></div>
<div class="r" style="left:1358.5px;top:385.0px;width:145.3px;height:16px;display:flex"><div style="width:12.1%;background:#62d5a2"></div><div style="width:11.6%;background:#5acfe8"></div><div style="width:5.5%;background:#72a8ff"></div><div style="width:70.80000000000001%;background:#b088ff"></div></div>
</div>
<div class="r" style="left:289px;top:411.0px;width:1223px;height:1px;background:#e2e8f0;"></div>
<div style="position:absolute;left:0;top:0;width:1512px;height:850px;">
<div class="r" style="left:297px;top:425.0px;width:10px;height:10px;background:#f1f5f9;border-radius:2px;"></div>
<div class="t m" style="left:324.00px;top:424.18px;font-size:14px;color:#020817;">Mar 15, 2026 10:40:26</div>
<div class="t m" style="left:602.50px;top:424.18px;font-size:14px;color:#00c950;">200</div>
<div class="t s" style="left:689.50px;top:423.05px;font-size:14px;color:#020817;letter-spacing:-0.2px;">GET</div>
<div class="t s" style="left:786.8px;top:423.05px;font-size:14px;color:#020817;letter-spacing:0.1px">acme-shop.com</div>
<div class="t s" style="left:912.7px;top:423.05px;font-size:14px;color:#020817;letter-spacing:0.65px">/bikes/racing/tr<span style="letter-spacing:-0.6px">...</span></div>
<div class="t m" style="left:1042.3px;top:424.18px;font-size:14px;color:#020817">783<span style="color:#62748e">ms</span></div>
<div class="t s" style="left:1171.6px;top:423.05px;font-size:14px;color:#020817;letter-spacing:0.1px">iad <span style="font-size:12px;color:#62748e;letter-spacing:0px;margin-left:0.6px">Washington D.C.</span></div>
<div class="r" style="left:1358.5px;top:422.0px;width:145.3px;height:16px;display:flex"><div style="width:10.0%;background:#62d5a2"></div><div style="width:17.4%;background:#5acfe8"></div><div style="width:5.6%;background:#72a8ff"></div><div style="width:67.0%;background:#b088ff"></div></div>
</div>
<div class="r" style="left:289px;top:448.0px;width:1223px;height:1px;background:#e2e8f0;"></div>
<div style="position:absolute;left:0;top:0;width:1512px;height:850px;">
<div class="r" style="left:297px;top:462.0px;width:10px;height:10px;background:#f1f5f9;border-radius:2px;"></div>
<div class="t m" style="left:324.00px;top:461.18px;font-size:14px;color:#020817;">Mar 15, 2026 10:40:26</div>
<div class="t m" style="left:602.50px;top:461.18px;font-size:14px;color:#00c950;">200</div>
<div class="t s" style="left:689.50px;top:460.05px;font-size:14px;color:#020817;letter-spacing:-0.2px;">GET</div>
<div class="t s" style="left:786.8px;top:460.05px;font-size:14px;color:#020817;letter-spacing:0.1px">acme-shop.com</div>
<div class="t s" style="left:912.7px;top:460.05px;font-size:14px;color:#020817;letter-spacing:0.65px">/bikes/racing/tr<span style="letter-spacing:-0.6px">...</span></div>
<div class="t m" style="left:1042.3px;top:461.18px;font-size:14px;color:#020817">1,325<span style="color:#62748e">ms</span></div>
<div class="t s" style="left:1171.6px;top:460.05px;font-size:14px;color:#020817;letter-spacing:0.1px">gru <span style="font-size:12px;color:#62748e;letter-spacing:0px;margin-left:0.6px">Sao Paulo</span></div>
<div class="r" style="left:1358.5px;top:459.0px;width:145.3px;height:16px;display:flex"><div style="width:14.5%;background:#62d5a2"></div><div style="width:23.6%;background:#5acfe8"></div><div style="width:5.5%;background:#72a8ff"></div><div style="width:56.4%;background:#b088ff"></div></div>
</div>
<div class="r" style="left:289px;top:485.0px;width:1223px;height:1px;background:#e2e8f0;"></div>
<div style="position:absolute;left:0;top:0;width:1512px;height:850px;">
<div class="r" style="left:297px;top:499.0px;width:10px;height:10px;background:#f1f5f9;border-radius:2px;"></div>
<div class="t m" style="left:324.00px;top:498.18px;font-size:14px;color:#020817;">Mar 15, 2026 10:40:26</div>
<div class="t m" style="left:602.50px;top:498.18px;font-size:14px;color:#00c950;">200</div>
<div class="t s" style="left:689.50px;top:497.05px;font-size:14px;color:#020817;letter-spacing:-0.2px;">GET</div>
<div class="t s" style="left:786.8px;top:497.05px;font-size:14px;color:#020817;letter-spacing:0.1px">acme-shop.com</div>
<div class="t s" style="left:912.7px;top:497.05px;font-size:14px;color:#020817;letter-spacing:0.65px">/bikes/racing/tr<span style="letter-spacing:-0.6px">...</span></div>
<div class="t m" style="left:1042.3px;top:498.18px;font-size:14px;color:#020817">892<span style="color:#62748e">ms</span></div>
<div class="t s" style="left:1171.6px;top:497.05px;font-size:14px;color:#020817;letter-spacing:0.1px">fra <span style="font-size:12px;color:#62748e;letter-spacing:0px;margin-left:0.6px">Frankfurt</span></div>
<div class="r" style="left:1358.5px;top:496.0px;width:145.3px;height:16px;display:flex"><div style="width:6.9%;background:#62d5a2"></div><div style="width:23.4%;background:#5acfe8"></div><div style="width:7.2%;background:#72a8ff"></div><div style="width:62.499999999999986%;background:#b088ff"></div></div>
</div>
<div class="r" style="left:289px;top:522.0px;width:1223px;height:1px;background:#e2e8f0;"></div>
<div style="position:absolute;left:0;top:0;width:1512px;height:850px;">
<div class="r" style="left:297px;top:536.0px;width:10px;height:10px;background:#f1f5f9;border-radius:2px;"></div>
<div class="t m" style="left:324.00px;top:535.18px;font-size:14px;color:#020817;">Mar 15, 2026 10:40:26</div>
<div class="t m" style="left:602.50px;top:535.18px;font-size:14px;color:#00c950;">200</div>
<div class="t s" style="left:689.50px;top:534.05px;font-size:14px;color:#020817;letter-spacing:-0.2px;">GET</div>
<div class="t s" style="left:786.8px;top:534.05px;font-size:14px;color:#020817;letter-spacing:0.1px">acme-shop.com</div>
<div class="t s" style="left:912.7px;top:534.05px;font-size:14px;color:#020817;letter-spacing:0.65px">/bikes/racing/tr<span style="letter-spacing:-0.6px">...</span></div>
<div class="t m" style="left:1042.3px;top:535.18px;font-size:14px;color:#020817">1,000<span style="color:#62748e">ms</span></div>
<div class="t s" style="left:1171.6px;top:534.05px;font-size:14px;color:#020817;letter-spacing:0.1px">ams <span style="font-size:12px;color:#62748e;letter-spacing:0px;margin-left:0.6px">Amsterdam</span></div>
<div class="r" style="left:1358.5px;top:533.0px;width:145.3px;height:16px;display:flex"><div style="width:12.7%;background:#62d5a2"></div><div style="width:15.7%;background:#5acfe8"></div><div style="width:4.9%;background:#72a8ff"></div><div style="width:66.69999999999999%;background:#b088ff"></div></div>
</div>
<div class="r" style="left:289px;top:559.0px;width:1223px;height:1px;background:#e2e8f0;"></div>
<div class="r" style="left:289px;top:560px;width:1223px;height:1px;background:#e2e8f0;"></div>
<div class="r" style="left:289px;top:560px;width:1px;height:37px;background:#e2e8f0;"></div>
<div class="r" style="left:1511px;top:560px;width:1px;height:37px;background:#e2e8f0;"></div>
<div class="r" style="left:297.5px;top:574px;width:9.5px;height:10px;background:#00a6f4;border-radius:2px;"></div>
<div class="t s" style="left:324.30px;top:572.15px;font-size:14px;color:#00a6f4;letter-spacing:0.3px;">Live Mode</div>
<div class="r" style="left:289px;top:597px;width:1223px;height:1px;background:#e2e8f0;"></div>
<div style="position:absolute;left:0;top:0;width:1512px;height:850px;opacity:0.5;">
<div class="r" style="left:297px;top:611.0px;width:10px;height:10px;background:#f1f5f9;border-radius:2px;"></div>
<div class="t m" style="left:324.00px;top:610.18px;font-size:14px;color:#020817;">Mar 15, 2026 10:30:26</div>
<div class="t m" style="left:602.50px;top:610.18px;font-size:14px;color:#00c950;">200</div>
<div class="t s" style="left:689.50px;top:609.05px;font-size:14px;color:#020817;letter-spacing:-0.2px;">POST</div>
<div class="t s" style="left:786.8px;top:609.05px;font-size:14px;color:#020817;letter-spacing:0.1px">api.acme-shop.<span style="letter-spacing:-0.6px">...</span></div>
<div class="t s" style="left:912.7px;top:609.05px;font-size:14px;color:#020817;letter-spacing:0.4px">/v1/products</div>
<div class="t m" style="left:1042.3px;top:610.18px;font-size:14px;color:#020817">1,265<span style="color:#62748e">ms</span></div>
<div class="t s" style="left:1171.6px;top:609.05px;font-size:14px;color:#020817;letter-spacing:0.1px">syd <span style="font-size:12px;color:#62748e;letter-spacing:0px;margin-left:0.6px">Sydney</span></div>
<div class="r" style="left:1358.5px;top:608.0px;width:145.3px;height:16px;display:flex"><div style="width:9.3%;background:#62d5a2"></div><div style="width:21.9%;background:#5acfe8"></div><div style="width:8.0%;background:#72a8ff"></div><div style="width:60.80000000000001%;background:#b088ff"></div></div>
</div>
<div class="r" style="left:289px;top:634.0px;width:1223px;height:1px;background:#eff3f7;"></div>
<div style="position:absolute;left:0;top:0;width:1512px;height:850px;opacity:0.5;">
<div class="r" style="left:297px;top:648.0px;width:10px;height:10px;background:#f1f5f9;border-radius:2px;"></div>
<div class="t m" style="left:324.00px;top:647.18px;font-size:14px;color:#020817;">Mar 15, 2026 10:30:26</div>
<div class="t m" style="left:602.50px;top:647.18px;font-size:14px;color:#00c950;">200</div>
<div class="t s" style="left:689.50px;top:646.05px;font-size:14px;color:#020817;letter-spacing:-0.2px;">POST</div>
<div class="t s" style="left:786.8px;top:646.05px;font-size:14px;color:#020817;letter-spacing:0.1px">api.acme-shop.<span style="letter-spacing:-0.6px">...</span></div>
<div class="t s" style="left:912.7px;top:646.05px;font-size:14px;color:#020817;letter-spacing:0.4px">/v1/products</div>
<div class="t m" style="left:1042.3px;top:647.18px;font-size:14px;color:#020817">647<span style="color:#62748e">ms</span></div>
<div class="t s" style="left:1171.6px;top:646.05px;font-size:14px;color:#020817;letter-spacing:0.1px">iad <span style="font-size:12px;color:#62748e;letter-spacing:0px;margin-left:0.6px">Washington D.C.</span></div>
<div class="r" style="left:1358.5px;top:645.0px;width:145.3px;height:16px;display:flex"><div style="width:9.0%;background:#62d5a2"></div><div style="width:28.6%;background:#5acfe8"></div><div style="width:5.7%;background:#72a8ff"></div><div style="width:56.699999999999996%;background:#b088ff"></div></div>
</div>
<div class="r" style="left:289px;top:671.0px;width:1223px;height:1px;background:#eff3f7;"></div>
<div style="position:absolute;left:0;top:0;width:1512px;height:850px;opacity:0.5;">
<div class="r" style="left:297px;top:685.0px;width:10px;height:10px;background:#f1f5f9;border-radius:2px;"></div>
<div class="t m" style="left:324.00px;top:684.18px;font-size:14px;color:#020817;">Mar 15, 2026 10:30:26</div>
<div class="t m" style="left:602.50px;top:684.18px;font-size:14px;color:#00c950;">200</div>
<div class="t s" style="left:689.50px;top:683.05px;font-size:14px;color:#020817;letter-spacing:-0.2px;">POST</div>
<div class="t s" style="left:786.8px;top:683.05px;font-size:14px;color:#020817;letter-spacing:0.1px">api.acme-shop.<span style="letter-spacing:-0.6px">...</span></div>
<div class="t s" style="left:912.7px;top:683.05px;font-size:14px;color:#020817;letter-spacing:0.4px">/v1/products</div>
<div class="t m" style="left:1042.3px;top:684.18px;font-size:14px;color:#020817">1,353<span style="color:#62748e">ms</span></div>
<div class="t s" style="left:1171.6px;top:683.05px;font-size:14px;color:#020817;letter-spacing:0.1px">hkg <span style="font-size:12px;color:#62748e;letter-spacing:0px;margin-left:0.6px">Hong Kong</span></div>
<div class="r" style="left:1358.5px;top:682.0px;width:145.3px;height:16px;display:flex"><div style="width:13.8%;background:#62d5a2"></div><div style="width:14.3%;background:#5acfe8"></div><div style="width:7.8%;background:#72a8ff"></div><div style="width:64.10000000000001%;background:#b088ff"></div></div>
</div>
<div class="r" style="left:289px;top:708.0px;width:1223px;height:1px;background:#eff3f7;"></div>
<div style="position:absolute;left:0;top:0;width:1512px;height:850px;opacity:0.5;">
<div class="r" style="left:297px;top:722.0px;width:10px;height:10px;background:#f1f5f9;border-radius:2px;"></div>
<div class="t m" style="left:324.00px;top:721.18px;font-size:14px;color:#020817;">Mar 15, 2026 10:30:26</div>
<div class="t m" style="left:602.50px;top:721.18px;font-size:14px;color:#00c950;">200</div>
<div class="t s" style="left:689.50px;top:720.05px;font-size:14px;color:#020817;letter-spacing:-0.2px;">POST</div>
<div class="t s" style="left:786.8px;top:720.05px;font-size:14px;color:#020817;letter-spacing:0.1px">api.acme-shop.<span style="letter-spacing:-0.6px">...</span></div>
<div class="t s" style="left:912.7px;top:720.05px;font-size:14px;color:#020817;letter-spacing:0.4px">/v1/products</div>
<div class="t m" style="left:1042.3px;top:721.18px;font-size:14px;color:#020817">1,530<span style="color:#62748e">ms</span></div>
<div class="t s" style="left:1171.6px;top:720.05px;font-size:14px;color:#020817;letter-spacing:0.1px">gru <span style="font-size:12px;color:#62748e;letter-spacing:0px;margin-left:0.6px">Sao Paulo</span></div>
<div class="r" style="left:1358.5px;top:719.0px;width:145.3px;height:16px;display:flex"><div style="width:10.3%;background:#62d5a2"></div><div style="width:17.0%;background:#5acfe8"></div><div style="width:5.0%;background:#72a8ff"></div><div style="width:67.7%;background:#b088ff"></div></div>
</div>
<div class="r" style="left:289px;top:745.0px;width:1223px;height:1px;background:#eff3f7;"></div>
<div style="position:absolute;left:0;top:0;width:1512px;height:850px;opacity:0.5;">
<div class="r" style="left:297px;top:759.0px;width:10px;height:10px;background:#f1f5f9;border-radius:2px;"></div>
<div class="t m" style="left:324.00px;top:758.18px;font-size:14px;color:#020817;">Mar 15, 2026 10:30:26</div>
<div class="t m" style="left:602.50px;top:758.18px;font-size:14px;color:#00c950;">200</div>
<div class="t s" style="left:689.50px;top:757.05px;font-size:14px;color:#020817;letter-spacing:-0.2px;">POST</div>
<div class="t s" style="left:786.8px;top:757.05px;font-size:14px;color:#020817;letter-spacing:0.1px">api.acme-shop.<span style="letter-spacing:-0.6px">...</span></div>
<div class="t s" style="left:912.7px;top:757.05px;font-size:14px;color:#020817;letter-spacing:0.4px">/v1/products</div>
<div class="t m" style="left:1042.3px;top:758.18px;font-size:14px;color:#020817">823<span style="color:#62748e">ms</span></div>
<div class="t s" style="left:1171.6px;top:757.05px;font-size:14px;color:#020817;letter-spacing:0.1px">fra <span style="font-size:12px;color:#62748e;letter-spacing:0px;margin-left:0.6px">Frankfurt</span></div>
<div class="r" style="left:1358.5px;top:756.0px;width:145.3px;height:16px;display:flex"><div style="width:11.9%;background:#62d5a2"></div><div style="width:24.6%;background:#5acfe8"></div><div style="width:6.2%;background:#72a8ff"></div><div style="width:57.29999999999999%;background:#b088ff"></div></div>
</div>
<div class="r" style="left:289px;top:782.0px;width:1223px;height:1px;background:#eff3f7;"></div>
<div style="position:absolute;left:0;top:0;width:1512px;height:850px;opacity:0.5;">
<div class="r" style="left:297px;top:796.0px;width:10px;height:10px;background:#f1f5f9;border-radius:2px;"></div>
<div class="t m" style="left:324.00px;top:795.18px;font-size:14px;color:#020817;">Mar 15, 2026 10:30:26</div>
<div class="t m" style="left:602.50px;top:795.18px;font-size:14px;color:#00c950;">200</div>
<div class="t s" style="left:689.50px;top:794.05px;font-size:14px;color:#020817;letter-spacing:-0.2px;">POST</div>
<div class="t s" style="left:786.8px;top:794.05px;font-size:14px;color:#020817;letter-spacing:0.1px">api.acme-shop.<span style="letter-spacing:-0.6px">...</span></div>
<div class="t s" style="left:912.7px;top:794.05px;font-size:14px;color:#020817;letter-spacing:0.4px">/v1/products</div>
<div class="t m" style="left:1042.3px;top:795.18px;font-size:14px;color:#020817">1,000<span style="color:#62748e">ms</span></div>
<div class="t s" style="left:1171.6px;top:794.05px;font-size:14px;color:#020817;letter-spacing:0.1px">ams <span style="font-size:12px;color:#62748e;letter-spacing:0px;margin-left:0.6px">Amsterdam</span></div>
<div class="r" style="left:1358.5px;top:793.0px;width:145.3px;height:16px;display:flex"><div style="width:9.3%;background:#62d5a2"></div><div style="width:19.1%;background:#5acfe8"></div><div style="width:5.8%;background:#72a8ff"></div><div style="width:65.8%;background:#b088ff"></div></div>
</div>
<div class="r" style="left:289px;top:819.0px;width:1223px;height:1px;background:#eff3f7;"></div>
<div style="position:absolute;left:0;top:0;width:1512px;height:850px;opacity:0.5;">
<div class="r" style="left:297px;top:833.0px;width:10px;height:10px;background:#f1f5f9;border-radius:2px;"></div>
<div class="t m" style="left:324.00px;top:832.18px;font-size:14px;color:#020817;">Mar 15, 2026 10:20:26</div>
<div class="t m" style="left:602.50px;top:832.18px;font-size:14px;color:#00c950;">200</div>
<div class="t s" style="left:689.50px;top:831.05px;font-size:14px;color:#020817;letter-spacing:-0.2px;">POST</div>
<div class="t s" style="left:786.8px;top:831.05px;font-size:14px;color:#020817;letter-spacing:0.1px">api.acme-shop.<span style="letter-spacing:-0.6px">...</span></div>
<div class="t s" style="left:912.7px;top:831.05px;font-size:14px;color:#020817;letter-spacing:0.4px">/v1/customers</div>
<div class="t m" style="left:1042.3px;top:832.18px;font-size:14px;color:#020817">1,483<span style="color:#62748e">ms</span></div>
<div class="t s" style="left:1171.6px;top:831.05px;font-size:14px;color:#020817;letter-spacing:0.1px">gru <span style="font-size:12px;color:#62748e;letter-spacing:0px;margin-left:0.6px">Sao Paulo</span></div>
<div class="r" style="left:1358.5px;top:830.0px;width:145.3px;height:16px;display:flex"><div style="width:11.9%;background:#62d5a2"></div><div style="width:12.0%;background:#5acfe8"></div><div style="width:6.0%;background:#72a8ff"></div><div style="width:70.1%;background:#b088ff"></div></div>
</div>
<div class="r" style="left:289px;top:856.0px;width:1223px;height:1px;background:#eff3f7;"></div>
<div class="r" style="left:1325px;top:803px;width:171px;height:36px;background:#101828;border-radius:6px;"></div>
<div class="t s" style="left:1338.00px;top:814.15px;font-size:14px;color:#fff;-webkit-text-stroke:0.2px currentColor;letter-spacing:0.2px;">View GitHub Repo</div>
<svg class="i" style="left:1468.00px;top:812.70px;width:16px;height:16px;" viewBox="0 0 24 24" fill="none" stroke="#fff" stroke-width="2" stroke-linecap="round" stroke-linejoin="round"><path d="m9 18 6-6-6-6"/></svg>
<svg class="i" style="left:0;top:843px;width:1.6px;height:7px" viewBox="0 0 6 16" preserveAspectRatio="none"><path d="M0 0 C0.5 6 1.5 11 6 16 L0 16 Z" fill="#000"/></svg>
<svg class="i" style="left:1510.4px;top:843px;width:1.6px;height:7px" viewBox="0 0 6 16" preserveAspectRatio="none"><path d="M6 0 C5.5 6 4.5 11 0 16 L6 16 Z" fill="#000"/></svg>
</div></body></html>
